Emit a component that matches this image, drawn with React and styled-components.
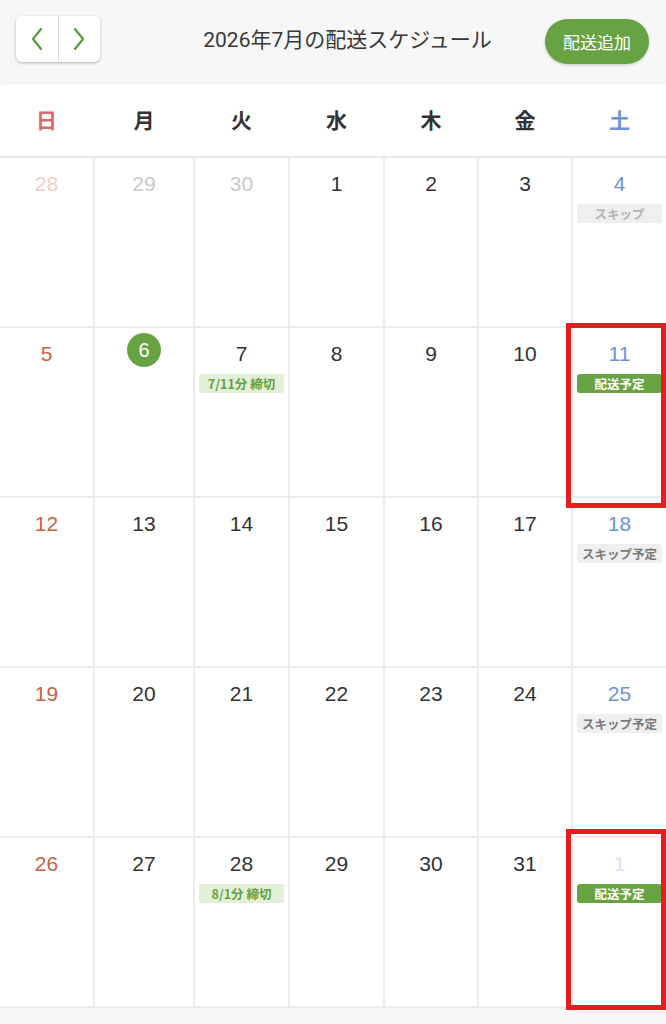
import styled, { createGlobalStyle } from 'styled-components';

const GlobalStyle = createGlobalStyle`
  body {
    margin: 0;
    background-color: #f6f6f6;
    font-family: Roboto, "Noto Sans CJK JP", sans-serif;
    color: #333;
  }
`;

const COLUMNS = '93px 98px 93px 93px 92px 92px 1fr';

const Page = styled.div`
  width: 666px;
  min-height: 1024px;
  background-color: #f6f6f6;
`;

const Header = styled.div`
  height: 82px;
  display: flex;
  align-items: center;
  padding: 0 17px 0 16px;
  box-sizing: border-box;
  background-color: #f7f7f7;
  box-shadow: 0 2px 4px rgba(0, 0, 0, 0.08);
  position: relative;
  z-index: 2;
`;

const NavGroup = styled.div`
  display: flex;
  width: 84px;
  height: 46px;
  margin-top: -4px;
  background-color: #fff;
  border-radius: 6px;
  box-shadow: 0 1px 3px rgba(0, 0, 0, 0.28);
  overflow: hidden;
`;

const NavButton = styled.button`
  flex: 1;
  border: none;
  background: transparent;
  display: flex;
  align-items: center;
  justify-content: center;
  padding: 0;
  cursor: pointer;
  & + & {
    border-left: 1px solid #dcdcdc;
  }
`;

const Title = styled.div`
  flex: 1;
  text-align: center;
  padding-left: 50px;
  margin-top: -6px;
  font-size: 21px;
  color: #383838;
  white-space: nowrap;
`;

const AddButton = styled.button`
  height: 45px;
  padding: 0 18px;
  border: none;
  border-radius: 23px;
  background-color: #68a343;
  color: #fff;
  font-family: Roboto, "Noto Sans CJK JP", sans-serif;
  font-size: 17px;
  box-shadow: 0 1px 3px rgba(0, 0, 0, 0.2);
  cursor: pointer;
`;

const WeekHead = styled.div`
  display: grid;
  grid-template-columns: ${COLUMNS};
  column-gap: 2px;
  height: 74px;
  align-items: center;
  background-color: #fff;
  border-bottom: 2px solid #e8e8e8;
`;

const WeekLabel = styled.div`
  text-align: center;
  font-family: "Noto Sans CJK JP", sans-serif;
  font-size: 21px;
  font-weight: 700;
  color: ${(p) => p.$color};
`;

const Grid = styled.div`
  display: grid;
  grid-template-columns: ${COLUMNS};
  grid-auto-rows: 168px;
  gap: 2px;
  background-color: #ececec;
  border-bottom: 2px solid #ececec;
`;

const Cell = styled.div`
  position: relative;
  background-color: #fff;
  padding-top: 14px;
  display: flex;
  flex-direction: column;
  align-items: stretch;
`;

const DayNum = styled.div`
  height: 24px;
  line-height: 24px;
  text-align: center;
  font-family: "Liberation Sans", Arial, sans-serif;
  font-size: 21px;
  color: ${(p) => p.$color};
`;

const TodayNum = styled.div`
  width: 34px;
  height: 34px;
  margin: -9px auto -1px;
  border-radius: 50%;
  background-color: #68a343;
  color: #fff;
  font-family: "Liberation Sans", Arial, sans-serif;
  font-size: 20px;
  line-height: 34px;
  text-align: center;
`;

const Badge = styled.div`
  margin: 8px 4px 0;
  height: 19px;
  line-height: 19px;
  border-radius: 3px;
  text-align: center;
  font-family: "Noto Sans CJK JP", sans-serif;
  font-size: 12.5px;
  font-weight: 700;
  white-space: nowrap;
  background-color: ${(p) => p.$bg};
  color: ${(p) => p.$fg};
`;

const Highlight = styled.div`
  position: absolute;
  left: -7px;
  right: 0;
  top: ${(p) => p.$top}px;
  bottom: ${(p) => p.$bottom}px;
  border: 5px solid #e41e1e;
  pointer-events: none;
  z-index: 1;
`;

const BADGES = {
  skip: { bg: '#efefef', fg: '#b3b3b3', text: 'スキップ' },
  skipPlan: { bg: '#efefef', fg: '#7a7a7a', text: 'スキップ予定' },
  deliver: { bg: '#68a343', fg: '#fff', text: '配送予定' },
};

const WEEKDAYS = [
  { label: '日', color: '#d86a6a' },
  { label: '月', color: '#333' },
  { label: '火', color: '#333' },
  { label: '水', color: '#333' },
  { label: '木', color: '#333' },
  { label: '金', color: '#333' },
  { label: '土', color: '#6b93d6' },
];

const days = [
  { d: 28, out: true }, { d: 29, out: true }, { d: 30, out: true },
  { d: 1 }, { d: 2 }, { d: 3 }, { d: 4, badge: 'skip' },
  { d: 5 }, { d: 6, today: true }, { d: 7, deadline: '7/11分 締切' },
  { d: 8 }, { d: 9 }, { d: 10 }, { d: 11, badge: 'deliver', mark: [-5, -12] },
  { d: 12 }, { d: 13 }, { d: 14 }, { d: 15 }, { d: 16 }, { d: 17 }, { d: 18, badge: 'skipPlan' },
  { d: 19 }, { d: 20 }, { d: 21 }, { d: 22 }, { d: 23 }, { d: 24 }, { d: 25, badge: 'skipPlan' },
  { d: 26 }, { d: 27 }, { d: 28, deadline: '8/1分 締切' },
  { d: 29 }, { d: 30 }, { d: 31 }, { d: 1, out: true, badge: 'deliver', mark: [-9, -4] },
];

function numColor(col, out) {
  if (col === 0) return out ? '#f1cdcd' : '#c8613f';
  if (col === 6) return out ? '#d8e3f4' : '#6b93d6';
  return out ? '#c9c9c9' : '#333';
}

function Chevron({ dir }) {
  const pts = dir === 'left' ? '10,1 2,11 10,21' : '2,1 10,11 2,21';
  return (
    <svg width='12' height='22' viewBox='0 0 12 22'>
      <polyline points={pts} fill='none' stroke='#5d9a3f' strokeWidth='2.2' strokeLinecap='round' strokeLinejoin='round' />
    </svg>
  );
}

function DayCell({ day, col }) {
  const badge = day.badge ? BADGES[day.badge] : null;
  return (
    <Cell>
      {day.today ? <TodayNum>{day.d}</TodayNum> : <DayNum $color={numColor(col, day.out)}>{day.d}</DayNum>}
      {badge && (
        <Badge $bg={badge.bg} $fg={badge.fg}>
          {badge.text}
        </Badge>
      )}
      {day.deadline && (
        <Badge $bg='#e2f0d9' $fg='#67a040'>
          {day.deadline}
        </Badge>
      )}
      {day.mark && <Highlight $top={day.mark[0]} $bottom={day.mark[1]} />}
    </Cell>
  );
}

export default function App() {
  return (
    <Page>
      <GlobalStyle />
      <Header>
        <NavGroup>
          <NavButton>
            <Chevron dir='left' />
          </NavButton>
          <NavButton>
            <Chevron dir='right' />
          </NavButton>
        </NavGroup>
        <Title>2026年7月の配送スケジュール</Title>
        <AddButton>配送追加</AddButton>
      </Header>

      <WeekHead>
        {WEEKDAYS.map((w) => (
          <WeekLabel key={w.label} $color={w.color}>
            {w.label}
          </WeekLabel>
        ))}
      </WeekHead>

      <Grid>
        {days.map((day, i) => (
          <DayCell key={i} day={day} col={i % 7} />
        ))}
      </Grid>
    </Page>
  );
}
